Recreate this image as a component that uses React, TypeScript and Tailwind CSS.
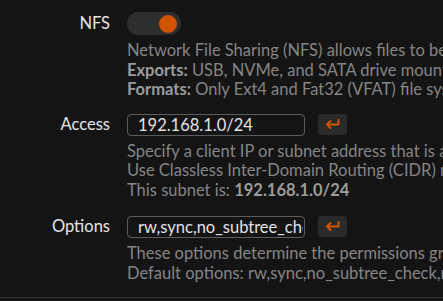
import React from 'react';

const font = { fontFamily: 'Lato, "Noto Sans", sans-serif' };

function EnterButton() {
  return (
    <button className="ml-[13px] flex h-[21px] w-[29px] shrink-0 items-center justify-center rounded-[3px] bg-[#2a2a2a]">
      <svg width="15" height="11" viewBox="0 0 15 11" fill="none" stroke="#d35400" strokeWidth="2" strokeLinecap="round" strokeLinejoin="round">
        <path d="M13.5 1v4.5H2" />
        <path d="M5.5 2L2 5.5 5.5 9" />
      </svg>
    </button>
  );
}

function TextField({ value }: { value: string }) {
  return (
    <input
      readOnly
      value={value}
      className="h-[22px] w-[178px] shrink-0 rounded-[4px] border border-[#5c5c5c] bg-transparent pl-[10px] pr-[1px] text-[16.5px] text-[#e2e2e2] outline-none"
      style={font}
    />
  );
}

export default function App() {
  return (
    <div className="h-[301px] w-[443px] overflow-hidden bg-[#141414] pt-[12px] text-[16.5px] leading-[19.5px]" style={font}>
      <div className="grid grid-cols-[110px_1fr] gap-x-[17px] whitespace-nowrap">
        {/* NFS */}
        <div className="flex h-[23px] items-center justify-end text-[#e4e4e4]">NFS</div>
        <div className="flex h-[23px] items-center">
          <div className="relative h-[23px] w-[54px] rounded-full bg-[#2e2e2e]">
            <div className="absolute right-[4px] top-[2.5px] h-[18px] w-[18px] rounded-full bg-[#d35400]" />
          </div>
        </div>
        <div />
        <div className="mt-[6px] overflow-hidden text-[#858585]">
          <div>Network File Sharing (NFS) allows files to be shared across the network.</div>
          <div><b className="text-[#9c9c9c]">Exports:</b> USB, NVMe, and SATA drive mounts are exported.</div>
          <div><b className="text-[#9c9c9c]">Formats:</b> Only Ext4 and Fat32 (VFAT) file systems are supported.</div>
        </div>

        {/* Access */}
        <div className="mt-[14px] flex h-[22px] items-center justify-end text-[#e4e4e4]">Access</div>
        <div className="mt-[14px] flex h-[22px] items-center">
          <TextField value="192.168.1.0/24" />
          <EnterButton />
        </div>
        <div />
        <div className="mt-[6px] overflow-hidden text-[#858585]">
          <div>Specify a client IP or subnet address that is allowed access.</div>
          <div>Use Classless Inter-Domain Routing (CIDR) notation.</div>
          <div>This subnet is: <b className="text-[#9c9c9c]">192.168.1.0/24</b></div>
        </div>

        {/* Options */}
        <div className="mt-[15px] flex h-[23px] items-center justify-end text-[#e4e4e4]">Options</div>
        <div className="mt-[15px] flex h-[23px] items-center">
          <TextField value="rw,sync,no_subtree_check,no_root_squash" />
          <EnterButton />
        </div>
        <div />
        <div className="mt-[6px] overflow-hidden text-[#858585]">
          <div>These options determine the permissions granted to clients.</div>
          <div>Default options: rw,sync,no_subtree_check,no_root_squash</div>
        </div>
      </div>
      <div className="mt-[14px] border-t border-[#333333]" />
    </div>
  );
}
